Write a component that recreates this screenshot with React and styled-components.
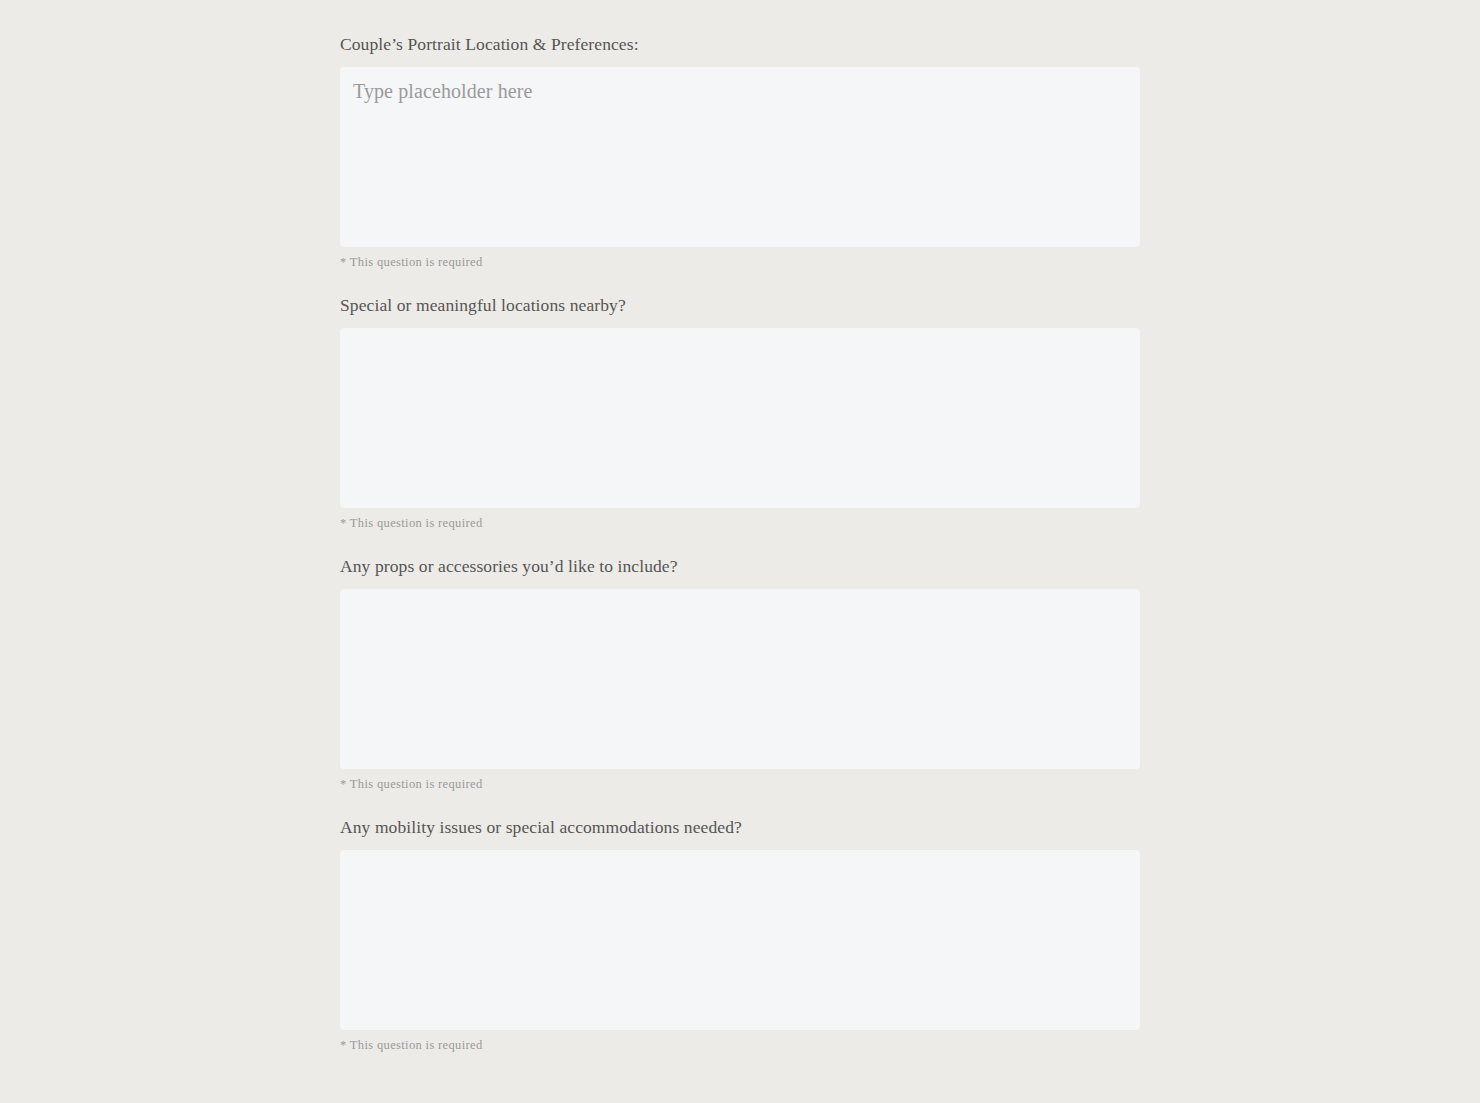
import styled, { createGlobalStyle } from 'styled-components'

const GlobalStyle = createGlobalStyle`
  html, body {
    margin: 0;
    padding: 0;
    background-color: #edebe7;
  }
  body {
    font-family: "Liberation Serif", "DejaVu Serif", serif;
  }
`;

const Page = styled.div`
  min-height: 1103px;
  background-color: #edebe7;
  padding-top: 32px;
  box-sizing: border-box;
`;

const Form = styled.form`
  width: 800px;
  margin: 0 auto;
  display: flex;
  flex-direction: column;
`;

const Question = styled.div`
  display: flex;
  flex-direction: column;
  margin-bottom: 23px;
`;

const Label = styled.label`
  font-size: 17.5px;
  line-height: 24px;
  letter-spacing: 0.1px;
  color: #555555;
  margin-bottom: 11px;
`;

const Answer = styled.textarea`
  display: block;
  width: 100%;
  height: 180px;
  box-sizing: border-box;
  padding: 12px 13px;
  border: none;
  border-radius: 4px;
  background-color: #f5f6f8;
  font-family: inherit;
  font-size: 20px;
  line-height: 24px;
  letter-spacing: 0.1px;
  color: #444;
  resize: none;
  outline: none;

  &::placeholder {
    color: #9a9a9a;
  }
`;

const Hint = styled.div`
  margin-top: 7px;
  font-size: 12.5px;
  line-height: 16px;
  letter-spacing: 0.35px;
  color: #9a9a9a;
`;

const questions = [
  { label: 'Couple\u2019s Portrait Location & Preferences:', placeholder: 'Type placeholder here' },
  { label: 'Special or meaningful locations nearby?' },
  { label: 'Any props or accessories you\u2019d like to include?' },
  { label: 'Any mobility issues or special accommodations needed?' },
]

const App = () => {
  return (
    <Page>
      <GlobalStyle />
      <Form>
        {questions.map((q, i) => (
          <Question key={i}>
            <Label htmlFor={`q${i}`}>{q.label}</Label>
            <Answer id={`q${i}`} placeholder={q.placeholder} />
            <Hint>* This question is required</Hint>
          </Question>
        ))}
      </Form>
    </Page>
  )
}

export default App
